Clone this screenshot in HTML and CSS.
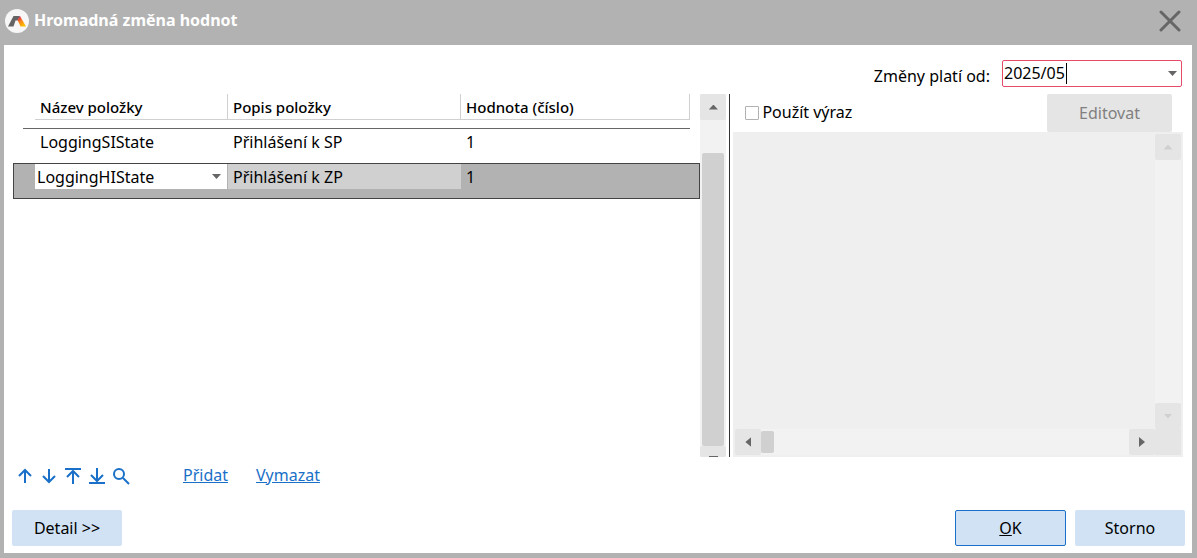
FILE: index.html
```html
<!DOCTYPE html>
<html lang="cs">
  <head>
    <meta charset="UTF-8" />
    <meta name="viewport" content="width=device-width, initial-scale=1.0" />
    <title>Hromadná změna hodnot</title>
    <link rel="stylesheet" href="styles.css">
  </head>
  <body>
    <header class="titlebar">
      <svg class="logo" viewBox="0 0 24 24" aria-hidden="true">
        <defs>
          <linearGradient id="flame" x1="0" y1="0" x2="0.6" y2="1">
            <stop offset="0.1" stop-color="#d4145a" />
            <stop offset="0.5" stop-color="#f7801e" />
            <stop offset="1" stop-color="#ffc000" />
          </linearGradient>
        </defs>
        <circle cx="12" cy="12" r="12" fill="#f7f7f7" />
        <path d="M3 17.500 8.500 7H15l-2.500 4.500h-2L8.500 17.500z" fill="#646464" />
        <path d="M15 7l6 10.500h-5.500L12.500 11z" fill="url(#flame)" />
      </svg>
      <h1>Hromadná změna hodnot</h1>
      <button class="close" type="button" aria-label="Zavřít">
        <svg viewBox="0 0 22 22"><path d="M2 2l18 18M20 2L2 20" /></svg>
      </button>
    </header>

    <main class="window">
      <div class="valid-from">
        <label for="valid-from">Změny platí od:</label>
        <div class="combo">
          <input id="valid-from" type="text" value="2025/05" size="7" />
          <span class="caret"></span>
          <button type="button" aria-label="Vybrat období"><i class="arrow down"></i></button>
        </div>
      </div>

      <div class="panels">
        <section class="list">
          <table>
            <colgroup>
              <col class="col-gutter" />
              <col class="col-name" />
              <col class="col-desc" />
              <col />
              <col class="col-end" />
            </colgroup>
            <thead>
              <tr>
                <td></td>
                <th><div class="head">Název položky</div></th>
                <th><div class="head">Popis položky</div></th>
                <th><div class="head">Hodnota (číslo)</div></th>
                <td></td>
              </tr>
            </thead>
            <tbody>
              <tr>
                <td></td>
                <td><div class="cell">LoggingSIState</div></td>
                <td><div class="cell">Přihlášení k SP</div></td>
                <td><div class="cell">1</div></td>
                <td></td>
              </tr>
              <tr class="selected">
                <td></td>
                <td>
                  <select aria-label="Název položky">
                    <option>LoggingSIState</option>
                    <option selected>LoggingHIState</option>
                  </select>
                </td>
                <td><div class="cell readonly">Přihlášení k ZP</div></td>
                <td><div class="cell">1</div></td>
                <td></td>
              </tr>
            </tbody>
          </table>
          <div class="scroll-v">
            <button type="button" aria-label="Nahoru"><i class="arrow up"></i></button>
            <div class="thumb"></div>
            <button class="cut" type="button" aria-label="Dolů"><i class="arrow down"></i></button>
          </div>
        </section>

        <section class="expression">
          <div class="expression-bar">
            <input id="use-expression" type="checkbox" />
            <label for="use-expression">Použít výraz</label>
            <button class="button" type="button" disabled>Editovat</button>
          </div>
          <div class="editor">
            <textarea aria-label="Výraz" disabled></textarea>
            <div class="scroll-v">
              <button type="button" aria-label="Nahoru" disabled><i class="arrow up"></i></button>
              <button type="button" aria-label="Dolů" disabled><i class="arrow down"></i></button>
            </div>
            <div class="scroll-h">
              <button type="button" aria-label="Doleva"><i class="arrow left"></i></button>
              <div class="thumb"></div>
              <button type="button" aria-label="Doprava"><i class="arrow right"></i></button>
            </div>
            <div class="corner"></div>
          </div>
        </section>
      </div>

      <div class="tools">
        <button type="button" aria-label="Předchozí">
          <svg viewBox="0 0 18 18"><path d="M9 16V3M3 9l6-6 6 6" /></svg>
        </button>
        <button type="button" aria-label="Další">
          <svg viewBox="0 0 18 18"><path d="M9 2v13M3 9l6 6 6-6" /></svg>
        </button>
        <button type="button" aria-label="První">
          <svg viewBox="0 0 18 18"><path d="M1 2h16M9 17V4M3 10l6-6 6 6" /></svg>
        </button>
        <button type="button" aria-label="Poslední">
          <svg viewBox="0 0 18 18"><path d="M1 16h16M9 1v13M3 8l6 6 6-6" /></svg>
        </button>
        <button type="button" aria-label="Hledat">
          <svg viewBox="0 0 18 18"><circle cx="7" cy="7" r="5" /><path d="M11 11l6 6" /></svg>
        </button>
        <a class="add" href="#">Přidat</a>
        <a class="remove" href="#">Vymazat</a>
      </div>

      <footer>
        <button class="button" type="button">Detail &gt;&gt;</button>
        <button class="button primary" type="submit"><u>O</u>K</button>
        <button class="button" type="button">Storno</button>
      </footer>
    </main>
  </body>
</html>
```
FILE: styles.css
```css
* {
  box-sizing: border-box;
}

body {
  margin: 0;
  min-height: 100vh;
  display: flex;
  flex-direction: column;
  padding: 0 5px 5px 4px;
  background-color: #b2b2b2;
  color: #000;
  font-family: Tahoma, "Noto Sans", sans-serif;
  font-size: 16px;
  line-height: 20px;
}

button,
input,
select,
textarea {
  font: inherit;
  color: inherit;
  margin: 0;
  padding: 0;
  border: none;
  background: none;
}

/* title bar */
.titlebar {
  display: flex;
  align-items: center;
  height: 45px;
  padding: 0 11px 4px 1px;
}
.titlebar h1 {
  margin: 0 auto 0 5px;
  padding-bottom: 2px;
  color: #fff;
  font-size: 16px;
  line-height: 20px;
}
.logo {
  width: 24px;
  height: 24px;
}
.close {
  width: 22px;
  height: 22px;
}
.close svg {
  display: block;
  stroke: #666;
  stroke-width: 3;
  fill: none;
  stroke-linecap: round;
}

.window {
  flex: 1;
  display: flex;
  flex-direction: column;
  padding: 15px 7px 7px 8px;
  background-color: #fff;
}

/* period picker */
.valid-from {
  display: flex;
  justify-content: flex-end;
  align-items: center;
  gap: 12px;
  padding-right: 3px;
}
.valid-from label {
  padding-top: 4px;
}
.combo {
  display: flex;
  align-items: center;
  width: 180px;
  height: 27px;
  padding: 0 4px 0 1px;
  border: 1px solid #e84a6a;
  border-radius: 2px;
}
.combo input {
  width: 62px;
  padding-bottom: 2px;
  outline: none;
  field-sizing: content;
}
.caret {
  width: 1px;
  height: 21px;
  background-color: #000;
}
.combo button {
  margin-left: auto;
  display: flex;
}

.arrow {
  display: block;
  width: 9px;
  height: 5px;
  background-color: #666;
}
.arrow.up {
  clip-path: polygon(50% 0, 100% 100%, 0 100%);
}
.arrow.down {
  clip-path: polygon(0 0, 100% 0, 50% 100%);
}
.arrow.left,
.arrow.right {
  width: 6px;
  height: 10px;
}
.arrow.left {
  clip-path: polygon(0 50%, 100% 0, 100% 100%);
}
.arrow.right {
  clip-path: polygon(0 0, 100% 50%, 0 100%);
}

.panels {
  flex: 1;
  display: flex;
  min-height: 240px;
  margin-top: 7px;
}

/* item list */
.list {
  flex: 714 1 0;
  display: flex;
  align-items: flex-start;
  padding-left: 1px;
}
.list table {
  flex: 1;
  table-layout: fixed;
  border-spacing: 0;
}
.col-gutter {
  width: 22px;
}
.col-name {
  width: 193px;
}
.col-desc {
  width: 233px;
}
.col-end {
  width: 10px;
}
th,
td {
  height: 34px;
  padding: 0;
  text-align: left;
  vertical-align: top;
}
thead tr {
  position: relative;
}
thead th,
thead td {
  height: 35px;
}
thead tr::after {
  content: "";
  position: absolute;
  left: 10px;
  right: 10px;
  bottom: 0;
  height: 1px;
  background-color: #666;
}
.head {
  height: 26px;
  padding: 3px 5px;
  border-right: 1px solid #d0d0d0;
  border-bottom: 1px solid #d0d0d0;
  font-size: 15px;
  font-weight: 500;
}
.cell {
  height: 25px;
  padding: 3px 5px;
}
.selected td {
  height: 36px;
  padding-top: 1px;
}
.selected {
  background-color: #b2b2b2;
  outline: 1px solid #444;
  outline-offset: -1px;
}
.selected select {
  display: block;
  appearance: none;
  width: calc(100% - 1px);
  height: 25px;
  padding-left: 2px;
  background: #fff url("data:image/svg+xml,%3Csvg xmlns='http://www.w3.org/2000/svg' width='9' height='5'%3E%3Cpath d='M0 0h9L4.500 5z' fill='%23666'/%3E%3C/svg%3E") no-repeat right 6px center;
}
.readonly {
  background-color: #d0d0d0;
}

/* scroll bars */
.scroll-v {
  align-self: stretch;
  width: 26px;
  display: flex;
  flex-direction: column;
  align-items: center;
  background-color: #f2f2f2;
}
.scroll-v button,
.scroll-h button {
  width: 26px;
  height: 26px;
  flex: none;
  display: flex;
  align-items: center;
  justify-content: center;
  border-radius: 2px;
  background-color: #e5e5e5;
}
.list .thumb {
  flex: 1;
  width: 22px;
  margin-top: 33px;
  border-radius: 2px;
  background-color: #d0d0d0;
}
.scroll-v .cut {
  height: 11px;
  align-items: flex-end;
  overflow: hidden;
}
.cut .arrow {
  height: 1px;
  clip-path: none;
}

/* expression editor */
.expression {
  flex: 450 1 0;
  display: flex;
  flex-direction: column;
  margin: 0 2px 0 3px;
  padding-left: 3px;
  border-left: 1px solid #333;
}
.expression-bar {
  display: flex;
  align-items: center;
  height: 38px;
  padding: 0 11px 0 12px;
}
.expression-bar input {
  appearance: none;
  width: 14px;
  height: 14px;
  margin-right: 3px;
  border: 1px solid #b2b2b2;
  border-radius: 1px;
  background-color: #fff;
}
.expression-bar label {
  padding-bottom: 2px;
}
.expression-bar .button {
  width: 125px;
  height: 38px;
  margin-left: auto;
}
.editor {
  flex: 1;
  display: grid;
  grid-template-columns: 1fr 26px;
  grid-template-rows: 1fr 26px;
  padding: 2px;
  background-color: #efefef;
}
.editor textarea {
  width: 100%;
  height: 100%;
  resize: none;
}
.editor .scroll-v {
  justify-content: space-between;
}
.editor .scroll-v .arrow {
  background-color: #d0d0d0;
}
.scroll-h {
  display: flex;
  align-items: center;
  background-color: #f2f2f2;
}
.scroll-h .thumb {
  width: 13px;
  height: 22px;
  margin-right: auto;
  border-radius: 2px;
  background-color: #d0d0d0;
}
.corner {
  background-color: #e5e5e5;
}

/* toolbar */
.tools {
  display: flex;
  align-items: center;
  gap: 6px;
  height: 20px;
  margin-top: 9px;
  padding-left: 4px;
}
.tools button {
  width: 18px;
  height: 18px;
}
.tools svg {
  display: block;
  fill: none;
  stroke: #1a70c8;
  stroke-width: 2;
}
.tools a {
  padding-bottom: 2px;
  color: #1a70c8;
}
.tools .add {
  margin-left: 47px;
}
.tools .remove {
  margin-left: 22px;
}

footer {
  display: flex;
  gap: 9px;
  margin-top: 24px;
}
.button {
  width: 110px;
  height: 36px;
  border-radius: 2px;
  background-color: #d0e2f4;
}
.button:disabled {
  background-color: #e5e5e5;
  color: #808080;
}
.primary {
  width: 111px;
  margin-left: auto;
  border: 1px solid #1a70c8;
}
```
